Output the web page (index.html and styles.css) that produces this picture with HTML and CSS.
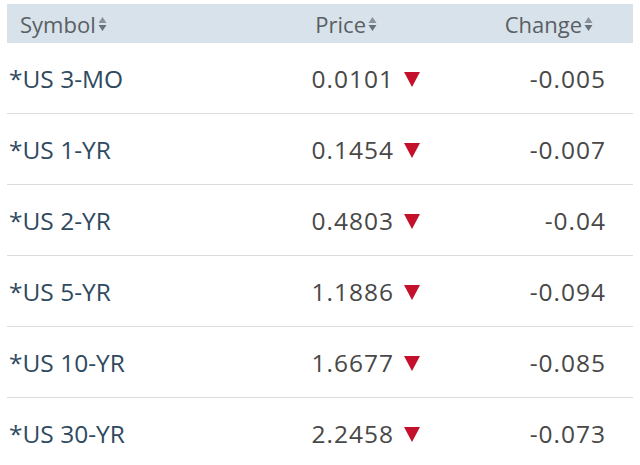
FILE: index.html
```html
<!DOCTYPE html>
<html>
<head>
<meta charset="utf-8">
<link rel="stylesheet" href="styles.css">
</head>
<body>
<div class="quotes">
  <div class="row head">
    <div class="cell sym">Symbol<span class="sort"><svg width="9" height="16" viewBox="0 0 9 16"><path d="M4.5 1 L8.5 7 L0.5 7 Z" fill="#8c9197"/><path d="M4.5 15 L8.5 9 L0.5 9 Z" fill="#6a7076"/></svg></span></div>
    <div class="cell price">Price<span class="sort"><svg width="9" height="16" viewBox="0 0 9 16"><path d="M4.5 1 L8.5 7 L0.5 7 Z" fill="#8c9197"/><path d="M4.5 15 L8.5 9 L0.5 9 Z" fill="#6a7076"/></svg></span></div>
    <div class="cell chg">Change<span class="sort"><svg width="9" height="16" viewBox="0 0 9 16"><path d="M4.5 1 L8.5 7 L0.5 7 Z" fill="#8c9197"/><path d="M4.5 15 L8.5 9 L0.5 9 Z" fill="#6a7076"/></svg></span></div>
  </div>
  <div class="row"><div class="cell sym">*US 3-MO</div><div class="cell price"><span class="num">0.0101</span><span class="down"></span></div><div class="cell chg"><span class="num">-0.005</span></div></div>
  <div class="row"><div class="cell sym">*US 1-YR</div><div class="cell price"><span class="num">0.1454</span><span class="down"></span></div><div class="cell chg"><span class="num">-0.007</span></div></div>
  <div class="row"><div class="cell sym">*US 2-YR</div><div class="cell price"><span class="num">0.4803</span><span class="down"></span></div><div class="cell chg"><span class="num">-0.04</span></div></div>
  <div class="row"><div class="cell sym">*US 5-YR</div><div class="cell price"><span class="num">1.1886</span><span class="down"></span></div><div class="cell chg"><span class="num">-0.094</span></div></div>
  <div class="row"><div class="cell sym">*US 10-YR</div><div class="cell price"><span class="num">1.6677</span><span class="down"></span></div><div class="cell chg"><span class="num">-0.085</span></div></div>
  <div class="row last"><div class="cell sym">*US 30-YR</div><div class="cell price"><span class="num">2.2458</span><span class="down"></span></div><div class="cell chg"><span class="num">-0.073</span></div></div>
</div>
</body>
</html>
```
FILE: styles.css
```css
html, body {
  margin: 0;
  padding: 0;
  background: #ffffff;
}
body {
  padding: 4px 7px 0 7px;
  font-family: "Open Sans", "Noto Sans", sans-serif;
}
.quotes {
  width: 626px;
}
.row {
  display: grid;
  grid-template-columns: 250px 163px 213px;
  align-items: center;
  height: 70px;
  border-bottom: 1px solid #dcdcdc;
  font-size: 24.5px;
  font-weight: 500;
  color: #484848;
}
.row.last {
  border-bottom: none;
}
.row.head {
  height: 39px;
  background: #d7e2ea;
  border-bottom: none;
  font-size: 22px;
  color: #5a5f64;
}
.cell {
  display: flex;
  align-items: center;
  white-space: nowrap;
}
.sym {
  padding-left: 2px;
  color: #2f4a5f;
}
.head .sym {
  padding-left: 13px;
  color: #5a5f64;
}
.num {
  letter-spacing: 1px;
  margin-right: -1px;
}
.price, .chg {
  justify-content: flex-end;
}
.head .price {
  padding-right: 43px;
}
.chg {
  padding-right: 28px;
}
.head .chg {
  padding-right: 40px;
}
.sort {
  display: inline-flex;
  margin-left: 2px;
}
.down {
  display: inline-block;
  width: 0;
  height: 0;
  margin-left: 11px;
  margin-top: 3px;
  border-left: 8.5px solid transparent;
  border-right: 8.5px solid transparent;
  border-top: 15px solid #c4102b;
}
```
